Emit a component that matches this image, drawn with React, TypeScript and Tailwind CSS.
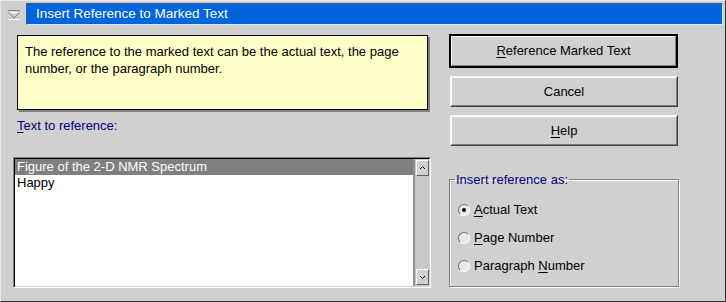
import { useState } from "react";

// Options for the radio group
const refOptions = [
    { id: "actual", pre: "", key: "A", post: "ctual Text" },
    { id: "page", pre: "", key: "P", post: "age Number" },
    { id: "para", pre: "Paragraph ", key: "N", post: "umber" },
];

const items = ["Figure of the 2-D NMR Spectrum", "Happy"];

// Raised push button
function Button({ children, primary }: { children: React.ReactNode; primary?: boolean }) {
    if (primary) {
        return (
            <div className="h-[34px] w-[229px] border-2 border-black">
                <div className="h-full w-full border border-t-white border-l-white border-b-[#808080] border-r-[#808080] flex items-center justify-center text-black">
                    {children}
                </div>
            </div>
        );
    }
    return (
        <div className="ml-[1px] h-[31px] w-[228px] border border-t-[#f4f4f4] border-l-[#f4f4f4] border-b-[#404040] border-r-[#404040]">
            <div className="h-full w-full border border-t-white border-l-white border-b-[#808080] border-r-[#808080] flex items-center justify-center text-black">
                {children}
            </div>
        </div>
    );
}

function ScrollButton({ up }: { up?: boolean }) {
    return (
        <div className="h-[16px] w-[13px] border border-t-white border-l-white border-b-[#606060] border-r-[#606060] bg-[#d0d0d0] flex items-center justify-center">
            <svg width="7" height="4" viewBox="0 0 7 4">
                <path d={up ? "M1 3 L3.5 0.5 L6 3" : "M1 1 L3.5 3.5 L6 1"} stroke="#000" strokeWidth="1" fill="none" />
            </svg>
        </div>
    );
}

export default function App() {
    const [choice, setChoice] = useState("actual");
    const [selected, setSelected] = useState(0);

    return (
        <div className="w-[726px] h-[302px] bg-[#d0d0d0] border border-t-[#e8e8e8] border-l-[#e8e8e8] border-b-[#303030] border-r-[#303030] font-['Liberation_Sans',Arial,sans-serif] text-[13px] text-black flex flex-col">
            {/* Title bar */}
            <div className="mt-[2px] h-[22px] flex">
                <div className="w-[25px] flex items-center justify-center">
                    <svg width="14" height="12" viewBox="0 0 14 12" className="ml-[1px] mt-[1px]">
                        <line x1="1" y1="1.5" x2="13" y2="1.5" stroke="#808080" />
                        <path d="M1.5 3.5 L7 9 L12.5 3.5" stroke="#808080" fill="none" />
                        <path d="M3 3.5 L11 3.5" stroke="#fff" />
                        <line x1="1" y1="10.5" x2="13" y2="10.5" stroke="#f4f4f4" />
                    </svg>
                </div>
                <div className="flex-1 mr-[2px] bg-[#0064dc] border border-t-[#3a5a8a] border-l-[#3a5a8a] border-b-[#c8ecff] border-r-[#c8ecff] flex items-center pl-[9px] text-white text-[13.5px]">
                    Insert Reference to Marked Text
                </div>
            </div>

            {/* Body */}
            <div className="flex flex-1">
                {/* Left column */}
                <div className="pl-[12px] flex flex-col">
                    <div className="ml-[4px] mt-[10px] h-[75px] w-[411px] bg-[#ffffc8] border border-black shadow-[2px_2px_0_#808080] px-[7px] pt-[7px] leading-[17px]">
                        The reference to the marked text can be the actual text, the page number, or the paragraph number.
                    </div>
                    <div className="ml-[4px] mt-[8px] h-[16px] leading-[16px] text-[#000080]">
                        <span className="underline underline-offset-2">T</span>ext to reference:
                    </div>
                    <div className="mt-[23px] h-[131px] w-[418px] border border-t-[#808080] border-l-[#808080] border-b-white border-r-white">
                        <div className="h-full w-full border border-t-black border-l-black border-b-[#d0d0d0] border-r-[#d0d0d0] flex bg-white">
                            <div className="flex-1 flex flex-col">
                                {items.map((t, i) => (
                                    <div
                                        key={t}
                                        onClick={() => setSelected(i)}
                                        className={`h-[16px] leading-[16px] pl-[2px] ${selected === i ? "bg-[#808080] text-white" : "text-black"}`}
                                    >
                                        {t}
                                    </div>
                                ))}
                            </div>
                            <div className="w-[16px] bg-[#c8c8c8] border-l-2 border-l-[#909090] flex flex-col justify-between pl-[1px] py-[1px]">
                                <ScrollButton up />
                                <ScrollButton />
                            </div>
                        </div>
                    </div>
                </div>

                {/* Right column */}
                <div className="ml-[18px] flex flex-col">
                    <div className="mt-[9px]">
                        <Button primary>
                            <span><span className="underline underline-offset-2">R</span>eference Marked Text</span>
                        </Button>
                    </div>
                    <div className="mt-[8px]">
                        <Button>Cancel</Button>
                    </div>
                    <div className="mt-[8px]">
                        <Button>
                            <span><span className="underline underline-offset-2">H</span>elp</span>
                        </Button>
                    </div>

                    <fieldset className="mt-[26px] w-[230px] h-[115px] border border-[#808080] shadow-[1px_1px_0_#fff,inset_1px_1px_0_#fff] pl-[8px] pt-[14px]">
                        <legend className="-ml-[3px] px-[1px] text-[#000080] leading-[15px]">Insert reference as:</legend>
                        <div className="flex flex-col gap-[11px]">
                            {refOptions.map(o => (
                                <div key={o.id} onClick={() => setChoice(o.id)} className="flex items-center h-[17px] cursor-default">
                                    <div className="w-[12px] h-[12px] rounded-full border border-t-[#707070] border-l-[#707070] border-b-white border-r-white bg-[#e8e8e8] flex items-center justify-center">
                                        {choice === o.id && <div className="w-[4px] h-[4px] rounded-full bg-black" />}
                                    </div>
                                    <span className="ml-[4px]">
                                        {o.pre}<span className="underline underline-offset-2">{o.key}</span>{o.post}
                                    </span>
                                </div>
                            ))}
                        </div>
                    </fieldset>
                </div>
            </div>
        </div>
    );
}
